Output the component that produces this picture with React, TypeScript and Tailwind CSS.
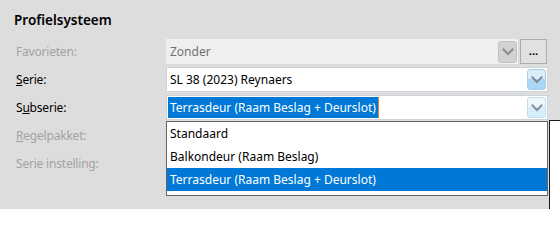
import React from "react";

function Chevron({ color }: { color: string }) {
  return (
    <svg width="12" height="8" viewBox="0 0 12 8" fill="none">
      <path d="M1.5 1.5 L6 6 L10.5 1.5" stroke={color} strokeWidth="2" strokeLinecap="square" />
    </svg>
  );
}

export default function App() {
  const font = { fontFamily: '"Noto Sans", "Open Sans", sans-serif' };
  return (
    <div className="relative h-[209px] w-[560px] overflow-hidden bg-[#dddddd] text-black" style={font}>
      <div className="pt-[11px] pl-[14px] text-[13.5px] font-semibold leading-[18px]">Profielsysteem</div>
      <div className="mt-[10px] flex flex-col gap-[3px]">
        {/* Favorieten */}
        <div className="flex h-[25px] items-center">
          <div className="w-[166px] pl-[16px] text-[12px] tracking-[-0.2px] text-[#a3a3a3]">Favorieten:</div>
          <div className="flex h-[25px] w-[352px] items-center bg-[#efefef] pr-[1px]">
            <div className="flex-1 pl-[4px] text-[12px] text-[#707070]">Zonder</div>
            <div className="flex h-[22px] w-[19px] items-center justify-center rounded-[3px] border border-[#c2c2c2] bg-[#d2d2d2]">
              <Chevron color="#8c8c8c" />
            </div>
          </div>
          <div className="ml-[2px] flex h-[25px] w-[27px] items-center justify-center border border-[#adadad] bg-[#e1e1e1] text-[11px] font-bold leading-none">
            <span className="-mt-[3px]">...</span>
          </div>
        </div>
        {/* Serie */}
        <div className="flex h-[25px] items-center">
          <div className="w-[166px] pl-[16px] text-[12px] tracking-[-0.2px]"><span className="underline">S</span>erie:</div>
          <div className="flex h-[25px] w-[382px] items-center border border-[#ccd3db] bg-white pr-[1px]">
            <div className="flex-1 pl-[3px] text-[12px]">SL 38 (2023) Reynaers</div>
            <div className="flex h-[21px] w-[19px] items-center justify-center rounded-[3px] border border-[#a9cbe4] bg-[linear-gradient(#dcedfa_0%,#dcedfa_45%,#aad7f5_50%,#aad7f5_100%)]">
              <Chevron color="#7f8a94" />
            </div>
          </div>
        </div>
        {/* Subserie */}
        <div className="flex h-[25px] items-center">
          <div className="w-[166px] pl-[16px] text-[12px] tracking-[-0.2px]">S<span className="underline">u</span>bserie:</div>
          <div className="flex h-[25px] w-[382px] items-center border border-[#ccd3db] bg-white pr-[1px]">
            <div className="flex flex-1 items-center pl-[1px]">
              <span className="flex h-[21px] items-center bg-[#0078d7] px-[2px] text-[12px] text-white">Terrasdeur (Raam Beslag + Deurslot)</span>
              <span className="h-[21px] w-[1px] bg-[#e0862a]" />
            </div>
            <div className="flex h-[21px] w-[19px] items-center justify-center rounded-[3px] border border-[#c3dcea] bg-[linear-gradient(#ebf6fd_0%,#ebf6fd_45%,#d6effb_50%,#d6effb_100%)]">
              <Chevron color="#8a939a" />
            </div>
          </div>
        </div>
        {/* Regelpakket */}
        <div className="flex h-[25px] items-center">
          <div className="w-[166px] pl-[16px] text-[12px] tracking-[-0.2px] text-[#a3a3a3]"><span className="underline">R</span>egelpakket:</div>
        </div>
        {/* Serie instelling */}
        <div className="flex h-[25px] items-center">
          <div className="w-[166px] pl-[16px] text-[12px] tracking-[-0.2px] text-[#a3a3a3]">Serie instelling:</div>
        </div>
      </div>

      {/* panel behind on the right */}
      <div className="absolute left-[549px] top-[120px] h-[120px] w-[40px] border border-[#1a1a1a] bg-white" />

      {/* open dropdown list */}
      <div className="absolute left-[166px] top-[121px] flex w-[382px] flex-col border border-[#646464] bg-white pb-[4px] text-[12px]">
        <div className="flex h-[23px] items-center pl-[3px]">Standaard</div>
        <div className="flex h-[23px] items-center pl-[3px]">Balkondeur (Raam Beslag)</div>
        <div className="flex h-[23px] items-center bg-[#0078d7] pl-[3px] text-white">Terrasdeur (Raam Beslag + Deurslot)</div>
      </div>
    </div>
  );
}
